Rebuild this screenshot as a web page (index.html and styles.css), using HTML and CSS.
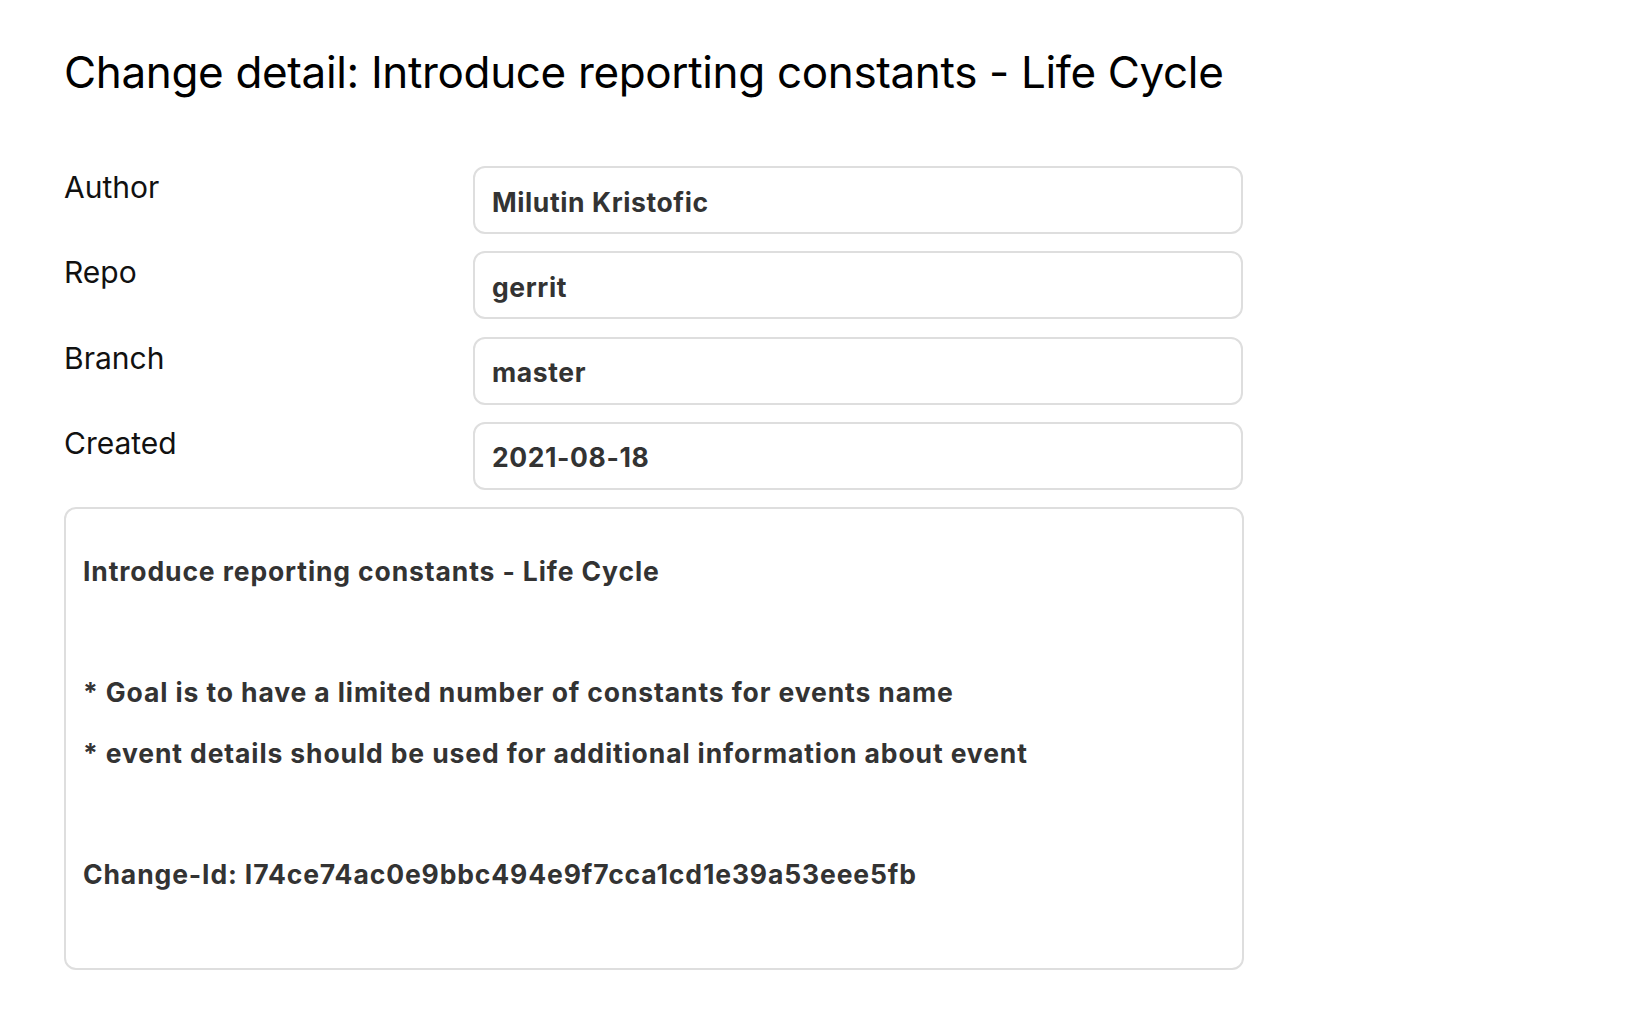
FILE: index.html
```html
<!DOCTYPE html>
<html lang="en">
<head>
<meta charset="utf-8">
<title>Change detail</title>
<link rel="stylesheet" href="styles.css">
</head>
<body>
<main class="page">
  <h1 class="title">Change detail: Introduce reporting constants - Life Cycle</h1>
  <div class="fields">
    <div class="label">Author</div>
    <div class="value">Milutin Kristofic</div>
    <div class="label">Repo</div>
    <div class="value">gerrit</div>
    <div class="label">Branch</div>
    <div class="value">master</div>
    <div class="label">Created</div>
    <div class="value">2021-08-18</div>
  </div>
  <div class="message">
    <div class="line">Introduce reporting constants - Life Cycle</div>
    <div class="line">&nbsp;</div>
    <div class="line">* Goal is to have a limited number of constants for events name</div>
    <div class="line">* event details should be used for additional information about event</div>
    <div class="line">&nbsp;</div>
    <div class="line">Change-Id: I74ce74ac0e9bbc494e9f7cca1cd1e39a53eee5fb</div>
  </div>
</main>
</body>
</html>
```

FILE: styles.css
```css
html, body {
  margin: 0;
  padding: 0;
  background: #ffffff;
}

body {
  font-family: Inter, "Liberation Sans", sans-serif;
  color: #000000;
}

.page {
  width: 1180px;
  padding: 46px 0 0 64px;
}

.title {
  margin: 0 0 67px 0;
  font-size: 44px;
  font-weight: 400;
  line-height: 53px;
  letter-spacing: -0.35px;
  color: #000000;
}

.fields {
  display: grid;
  grid-template-columns: 409px 770px;
  row-gap: 17.33px;
  align-items: start;
}

.label {
  font-size: 30px;
  line-height: 36px;
  padding-top: 3px;
  color: #111111;
}

.value {
  box-sizing: border-box;
  height: 68px;
  display: flex;
  align-items: center;
  padding: 3px 17px 0 17px;
  border: 2px solid #dedede;
  border-radius: 12px;
  font-size: 26.5px;
  font-weight: 700;
  letter-spacing: 0.6px;
  color: #333333;
}

.message {
  box-sizing: border-box;
  width: 1180px;
  height: 463px;
  margin-top: 17px;
  padding: 32px 17px 0 17px;
  border: 2px solid #dedede;
  border-radius: 12px;
  font-size: 26.5px;
  font-weight: 700;
  letter-spacing: 0.88px;
  color: #333333;
}

.line {
  line-height: 60.6px;
  white-space: nowrap;
}
```
